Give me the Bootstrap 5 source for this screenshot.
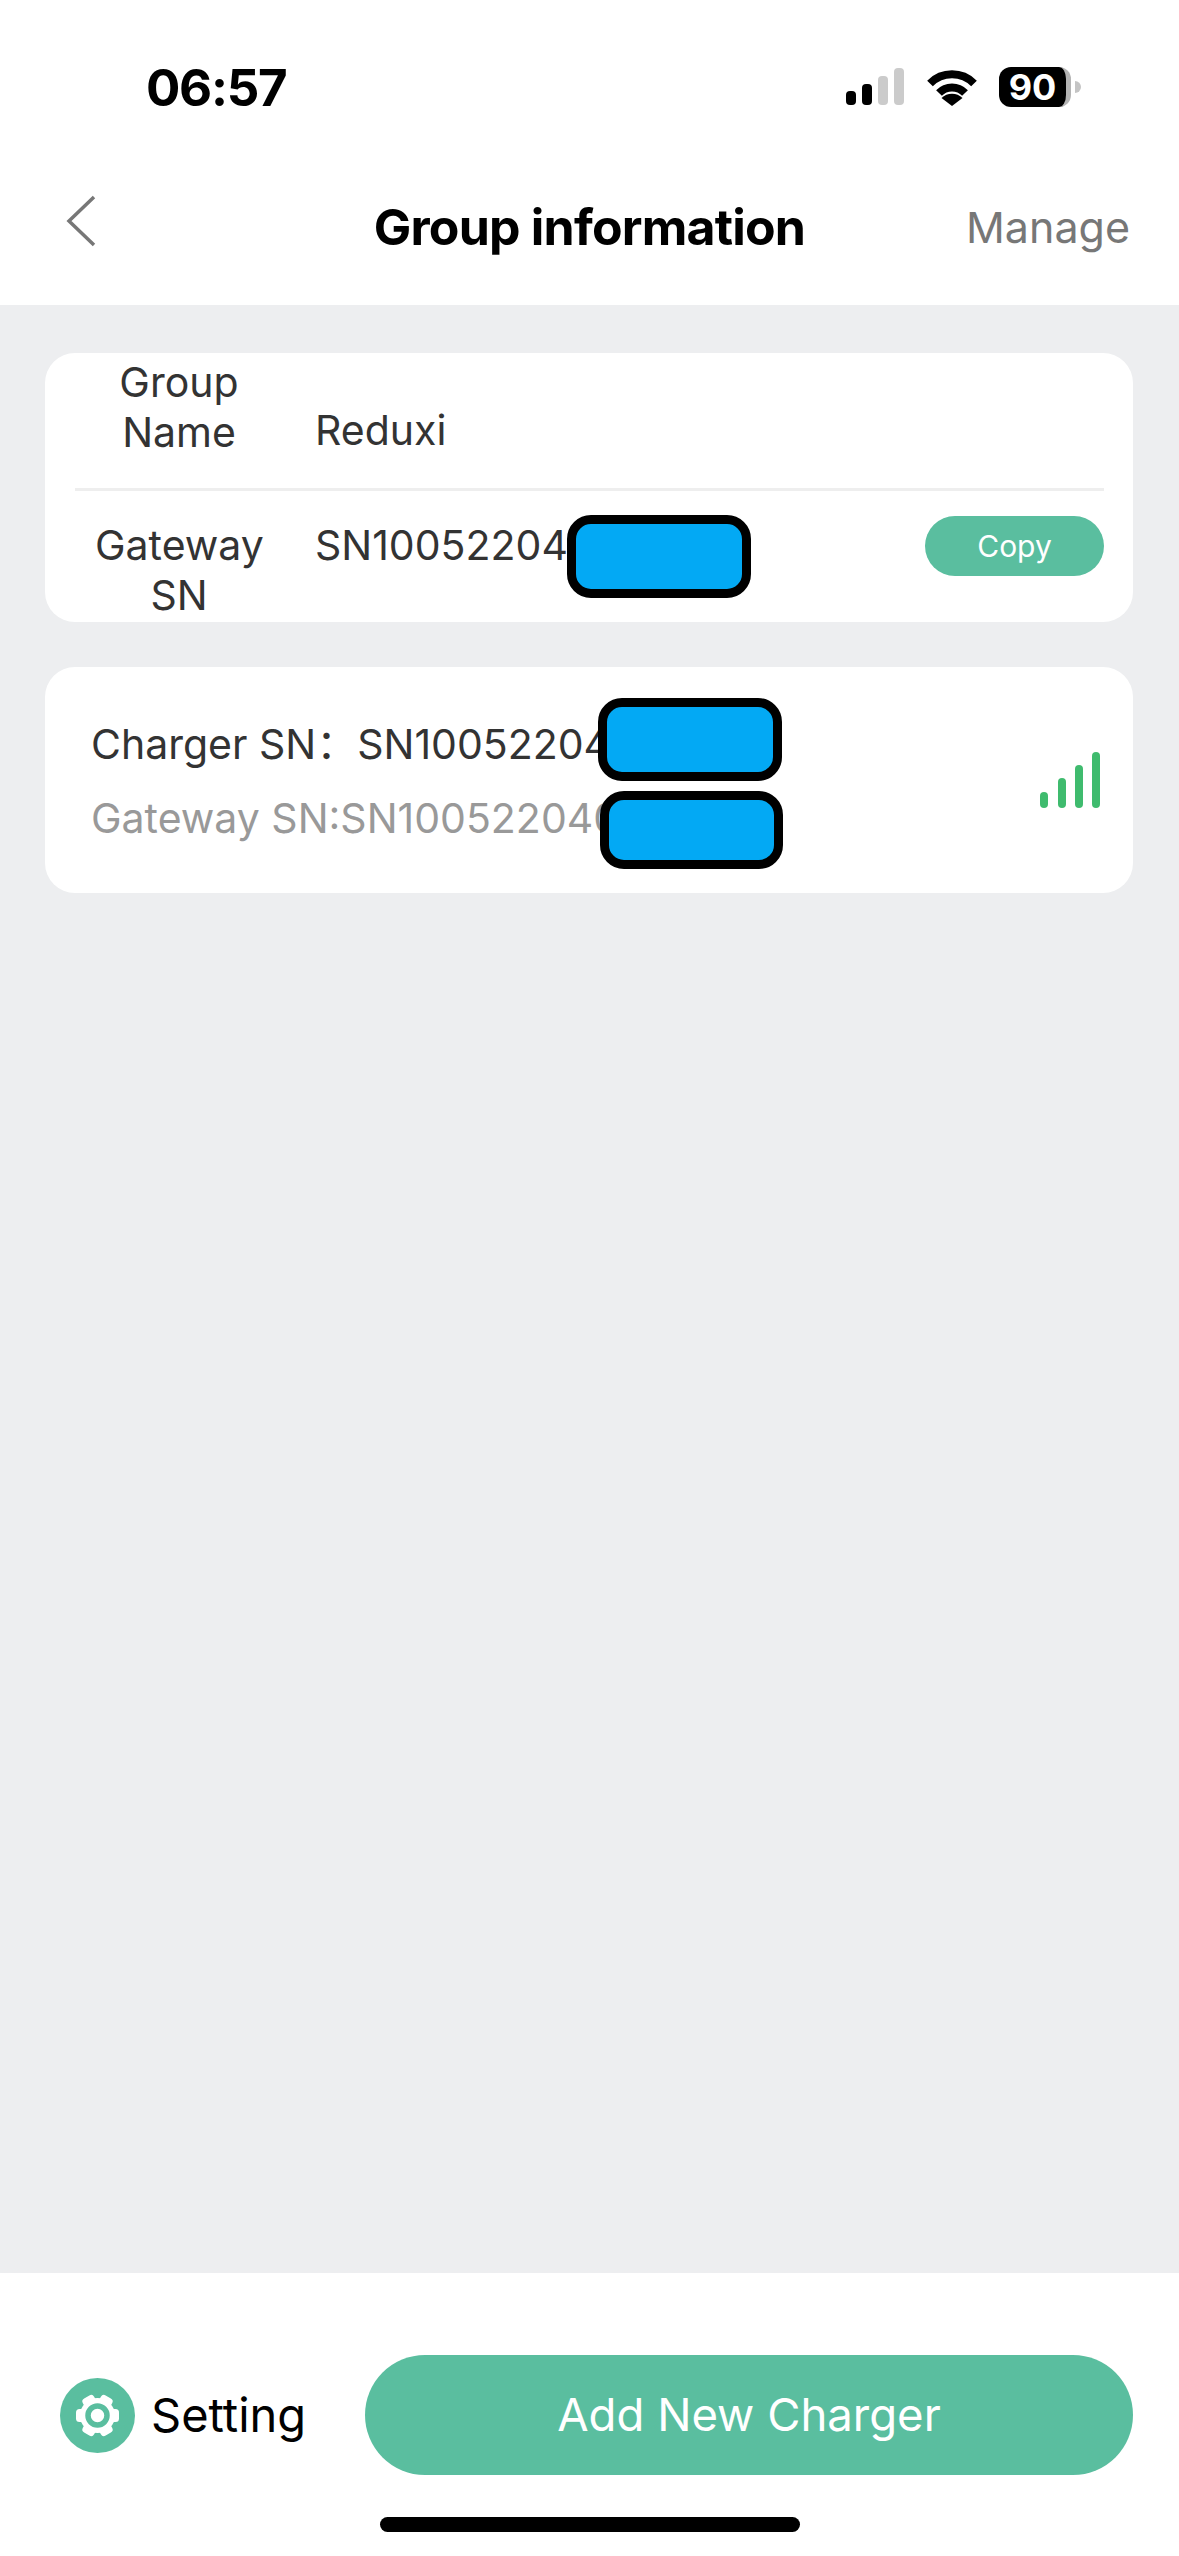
<!DOCTYPE html>
<html lang="en">

<head>
    <meta charset="UTF-8">
    <meta name="viewport" content="width=device-width, initial-scale=1.0">
    <title>Group information</title>

    <link href="https://cdn.jsdelivr.net/npm/bootstrap@5.3.0/dist/css/bootstrap.min.css" rel="stylesheet">

    <style>
        body {
            background-color: #fff;
            font-family: "Inter", "Noto Sans CJK SC", "Liberation Sans", sans-serif;
            color: #333;
        }

        .app-screen {
            width: 1179px;
            height: 2556px;
            overflow: hidden;
        }

        /* status bar */
        .status-strip {
            height: 150px;
            padding: 67px 98px 0 146px;
        }

        .status-time {
            font-size: 51px;
            line-height: 42px;
            font-weight: 700;
            letter-spacing: -1.300px;
            color: #000;
        }

        .status-icons {
            height: 40px;
        }

        .signal-mini {
            margin-right: 23px;
        }

        .wifi-mini {
            margin-right: 22px;
        }

        .batt-body {
            width: 72px;
            height: 40px;
            border-radius: 12px;
            background: #000;
            border-right: 5px solid #b4b4b4;
            color: #fff;
            font-size: 36px;
            line-height: 40px;
            font-weight: 700;
            text-align: center;
        }

        .batt-nub {
            width: 6px;
            height: 12px;
            margin-left: 4px;
            border-radius: 0 6px 6px 0;
            background: #c4c4c4;
        }

        /* title row */
        .title-row {
            height: 155px;
            display: grid;
            grid-template-columns: 1fr auto 1fr;
            align-items: center;
            padding: 0 49px;
        }

        .back-arrow {
            margin: 0 0 14px 16px;
        }

        .title-text {
            font-size: 50px;
            font-weight: 700;
            letter-spacing: -0.800px;
            color: #000;
        }

        .manage-link {
            font-size: 43px;
            color: #777;
            text-align: right;
        }

        /* grey area */
        .content-area {
            background: #edeef0;
            padding: 48px 46px 0 45px;
            gap: 45px;
        }

        .info-box {
            border: 0;
            border-radius: 30px;
            background: #fff;
            font-size: 41px;
            line-height: 50px;
            color: #333;
        }

        .group-box {
            height: 269px;
            padding: 4px 29px 0 30px;
            overflow: hidden;
        }

        .group-row {
            height: 131px;
        }

        .gateway-row {
            border-top: 3px solid #eeeeee;
            padding-top: 29px;
        }

        .row-label {
            width: 208px;
            margin-right: 32px;
            padding: 0 20px;
            text-align: center;
            flex-shrink: 0;
        }

        .copy-btn {
            width: 179px;
            height: 60px;
            margin-top: -4px;
            padding: 0;
            border: 0;
            background: #5abe9f;
            color: #fff;
            font-size: 30px;
            line-height: 60px;
        }

        .charger-box {
            height: 226px;
            padding: 52px 33px 0 46px;
        }

        .charger-sn {
            margin-bottom: 24px;
            white-space: nowrap;
        }

        .gateway-sn {
            color: #999;
            white-space: nowrap;
        }

        .signal-icon {
            margin-top: 33px;
        }

        /* blue redaction blocks */
        .blue-block {
            position: absolute;
            background: #03a9f4;
            border: 9px solid #000;
            border-radius: 24px;
        }

        .blue-one {
            left: 522px;
            top: 162px;
            width: 184px;
            height: 83px;
        }

        .blue-two {
            left: 553px;
            top: 31px;
            width: 184px;
            height: 83px;
        }

        .blue-three {
            left: 555px;
            top: 124px;
            width: 183px;
            height: 78px;
        }

        /* bottom bar */
        .bottom-bar {
            height: 283px;
            padding: 82px 46px 0 60px;
        }

        .gear-badge {
            width: 75px;
            height: 75px;
        }

        .setting-text {
            margin-left: 16px;
            font-size: 47px;
            color: #000;
        }

        .add-btn {
            width: 768px;
            height: 120px;
            border: 0;
            background: #5abe9f;
            color: #fff;
            font-size: 45.500px;
            line-height: 120px;
            padding: 0;
        }

        .home-bar {
            width: 420px;
            height: 15px;
            margin: 42px 0 0 320px;
            background: #000;
        }
    </style>
</head>

<body>

    <div class="app-screen d-flex flex-column">

        <!-- status bar -->
        <div class="status-strip d-flex justify-content-between align-items-start">
            <span class="status-time">06:57</span>
            <div class="status-icons d-flex align-items-center">
                <svg class="signal-mini" width="58" height="38" viewBox="0 0 58 38">
                    <rect x="0" y="23" width="10" height="14" rx="4" fill="#000"/>
                    <rect x="16" y="16" width="10" height="21" rx="4" fill="#000"/>
                    <rect x="32" y="8" width="10" height="29" rx="4" fill="#cbcbcb"/>
                    <rect x="48" y="0" width="10" height="37" rx="4" fill="#cbcbcb"/>
                </svg>
                <svg class="wifi-mini" width="50" height="38" viewBox="0 0 50 38">
                    <path d="M3 15.500A31 31 0 0 1 47 15.500" fill="none" stroke="#000" stroke-width="8"/>
                    <path d="M12 25A18 18 0 0 1 38 25" fill="none" stroke="#000" stroke-width="8"/>
                    <path d="M25 38L14.500 30A15 15 0 0 1 35.500 30Z" fill="#000"/>
                </svg>
                <div class="batt-body">90</div>
                <div class="batt-nub"></div>
            </div>
        </div>

        <!-- title -->
        <div class="title-row">
            <svg class="back-arrow" width="32" height="52" viewBox="0 0 32 52">
                <path d="M29 2L4 26L29 50" fill="none" stroke="#777" stroke-width="3.500"/>
            </svg>
            <span class="title-text">Group information</span>
            <span class="manage-link">Manage</span>
        </div>

        <!-- cards -->
        <div class="content-area flex-grow-1 d-flex flex-column">
            <div class="info-box group-box position-relative">
                <div class="group-row d-flex align-items-start">
                    <div class="row-label">Group Name</div>
                    <div class="pt-5 mt-0">Reduxi</div>
                </div>
                <div class="gateway-row d-flex align-items-start">
                    <div class="row-label">Gateway SN</div>
                    <div class="flex-grow-1">SN10052204</div>
                    <button type="button" class="btn copy-btn rounded-pill">Copy</button>
                </div>
                <div class="blue-block blue-one"></div>
            </div>

            <div class="info-box charger-box position-relative d-flex justify-content-between">
                <div>
                    <div class="charger-sn">Charger SN：SN10052204</div>
                    <div class="gateway-sn">Gateway SN:SN100522040</div>
                </div>
                <svg class="signal-icon" width="60" height="56" viewBox="0 0 60 56">
                    <rect x="0" y="40" width="8" height="16" rx="4" fill="#3fbb6e"/>
                    <rect x="18" y="26" width="8" height="30" rx="4" fill="#3fbb6e"/>
                    <rect x="35" y="13" width="8" height="43" rx="4" fill="#3fbb6e"/>
                    <rect x="52" y="0" width="8" height="56" rx="4" fill="#3fbb6e"/>
                </svg>
                <div class="blue-block blue-two"></div>
                <div class="blue-block blue-three"></div>
            </div>
        </div>

        <!-- bottom -->
        <div class="bottom-bar">
            <div class="d-flex align-items-center">
                <svg class="gear-badge flex-shrink-0" viewBox="0 0 75 75">
                    <circle cx="37.500" cy="37.500" r="37.500" fill="#5abe9f"/>
                    <g transform="translate(37.500 37.500)" fill="#fff">
                        <circle r="17.500"/>
                        <rect x="-6.500" y="-21.500" width="13" height="9" rx="3.500" transform="rotate(30)"/>
                        <rect x="-6.500" y="-21.500" width="13" height="9" rx="3.500" transform="rotate(90)"/>
                        <rect x="-6.500" y="-21.500" width="13" height="9" rx="3.500" transform="rotate(150)"/>
                        <rect x="-6.500" y="-21.500" width="13" height="9" rx="3.500" transform="rotate(210)"/>
                        <rect x="-6.500" y="-21.500" width="13" height="9" rx="3.500" transform="rotate(270)"/>
                        <rect x="-6.500" y="-21.500" width="13" height="9" rx="3.500" transform="rotate(330)"/>
                        <circle r="9.500" fill="none" stroke="#5abe9f" stroke-width="5.500"/>
                    </g>
                </svg>
                <span class="setting-text">Setting</span>
                <button type="button" class="btn add-btn rounded-pill ms-auto">Add New Charger</button>
            </div>
            <div class="home-bar rounded-pill"></div>
        </div>
    </div>

    <script src="https://cdn.jsdelivr.net/npm/bootstrap@5.3.0/dist/js/bootstrap.bundle.min.js"></script>

</body>

</html>
